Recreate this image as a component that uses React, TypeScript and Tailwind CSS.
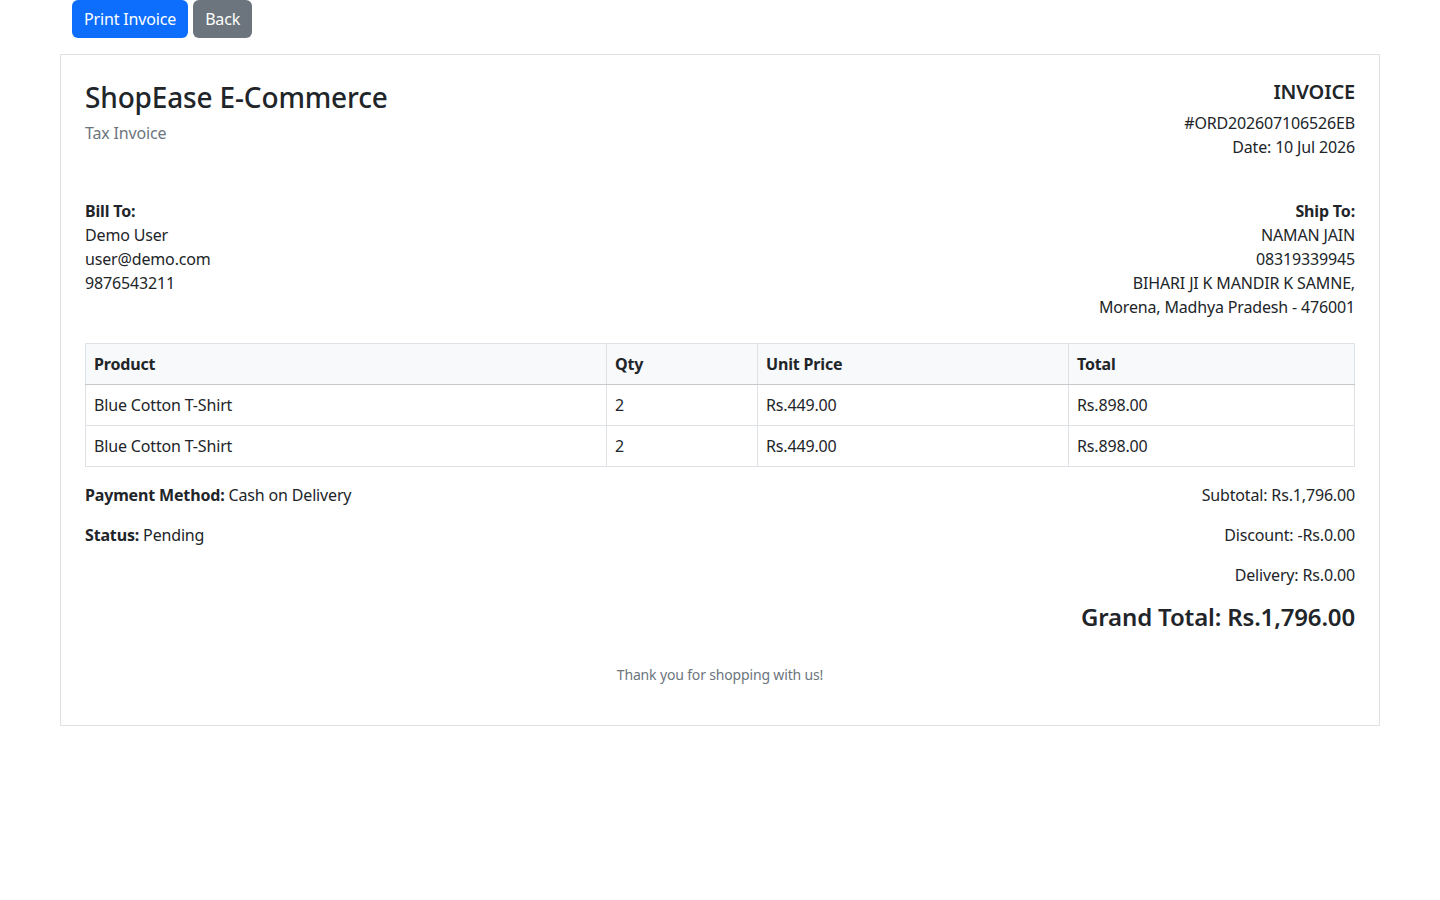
import React from 'react';

const items = [
  { name: 'Blue Cotton T-Shirt', qty: 2, price: 'Rs.449.00', total: 'Rs.898.00' },
  { name: 'Blue Cotton T-Shirt', qty: 2, price: 'Rs.449.00', total: 'Rs.898.00' },
];

export default function App() {
  return (
    <div className="min-h-screen bg-white text-[#212529] text-base leading-6 tracking-[-0.01em]" style={{ fontFamily: '"Noto Sans", "Open Sans", sans-serif' }}>
      <div className="w-[1320px] mx-auto">
        {/* Actions */}
        <div className="px-3 flex gap-[5px]">
          <button className="h-[38px] px-3 rounded-md bg-[#0d6efd] text-white">Print Invoice</button>
          <button className="h-[38px] px-3 rounded-md bg-[#6c757d] text-white">Back</button>
        </div>

        {/* Invoice card */}
        <div className="mt-4 border border-[#dee2e6] p-6">
          <div className="flex justify-between mb-6">
            <div>
              <h3 className="text-[28px] leading-[1.2] font-medium mb-1.5 pt-0.5">ShopEase E-Commerce</h3>
              <p className="text-[#6c757d] mb-4">Tax Invoice</p>
            </div>
            <div className="text-right">
              <h5 className="text-xl leading-6 font-semibold mb-2 pt-px">INVOICE</h5>
              <p className="mb-4 -mt-px">
                #ORD202607106526EB
                <br />
                Date: 10 Jul 2026
              </p>
            </div>
          </div>

          <div className="flex justify-between mb-6">
            <div>
              <strong className="font-bold">Bill To:</strong>
              <br />
              Demo User
              <br />
              user@demo.com
              <br />
              9876543211
            </div>
            <div className="text-right">
              <strong className="font-bold">Ship To:</strong>
              <br />
              NAMAN JAIN
              <br />
              08319339945
              <br />
              BIHARI JI K MANDIR K SAMNE,
              <br />
              Morena, Madhya Pradesh - 476001
            </div>
          </div>

          <table className="w-full border-collapse mb-4">
            <thead>
              <tr className="bg-[#f8f9fa]">
                <th className="w-[521px] text-left font-bold px-2 py-2 border border-[#dee2e6] border-b-[#c7c8c9]">Product</th>
                <th className="w-[151px] text-left font-bold px-2 py-2 border border-[#dee2e6] border-b-[#c7c8c9]">Qty</th>
                <th className="w-[311px] text-left font-bold px-2 py-2 border border-[#dee2e6] border-b-[#c7c8c9]">Unit Price</th>
                <th className="text-left font-bold px-2 py-2 border border-[#dee2e6] border-b-[#c7c8c9]">Total</th>
              </tr>
            </thead>
            <tbody>
              {items.map((it, i) => (
                <tr key={i}>
                  <td className="px-2 py-2 border border-[#dee2e6]">{it.name}</td>
                  <td className="px-2 py-2 border border-[#dee2e6]">{it.qty}</td>
                  <td className="px-2 py-2 border border-[#dee2e6]">{it.price}</td>
                  <td className="px-2 py-2 border border-[#dee2e6]">{it.total}</td>
                </tr>
              ))}
            </tbody>
          </table>

          <div className="flex justify-between">
            <div>
              <p className="mb-4">
                <strong className="font-bold">Payment Method:</strong> Cash on Delivery
              </p>
              <p className="mb-4">
                <strong className="font-bold">Status:</strong> Pending
              </p>
            </div>
            <div className="text-right">
              <p className="mb-4">Subtotal: Rs.1,796.00</p>
              <p className="mb-4">Discount: -Rs.0.00</p>
              <p className="mb-4">Delivery: Rs.0.00</p>
              <h4 className="text-2xl leading-[1.2] font-semibold mb-2">Grand Total: Rs.1,796.00</h4>
            </div>
          </div>

          <div className="text-center mt-6">
            <p className="text-sm leading-[21px] text-[#6c757d] mb-4">Thank you for shopping with us!</p>
          </div>
        </div>
      </div>
    </div>
  );
}
